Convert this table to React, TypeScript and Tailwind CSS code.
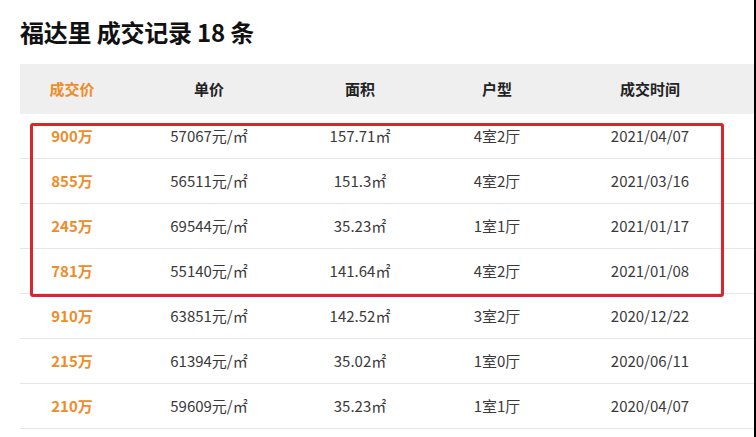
const rows = [
  { price: "900万", unit: "57067元/㎡", area: "157.71㎡", layout: "4室2厅", date: "2021/04/07" },
  { price: "855万", unit: "56511元/㎡", area: "151.3㎡", layout: "4室2厅", date: "2021/03/16" },
  { price: "245万", unit: "69544元/㎡", area: "35.23㎡", layout: "1室1厅", date: "2021/01/17" },
  { price: "781万", unit: "55140元/㎡", area: "141.64㎡", layout: "4室2厅", date: "2021/01/08" },
  { price: "910万", unit: "63851元/㎡", area: "142.52㎡", layout: "3室2厅", date: "2020/12/22" },
  { price: "215万", unit: "61394元/㎡", area: "35.02㎡", layout: "1室0厅", date: "2020/06/11" },
  { price: "210万", unit: "59609元/㎡", area: "35.23㎡", layout: "1室1厅", date: "2020/04/07" },
];

const cols = "grid grid-cols-[104px_170px_132px_142px_164px_1fr] items-center";

export default function App() {
  return (
    <div
      className="w-[756px] h-[437px] overflow-hidden bg-white border-r-2 border-black"
      style={{ fontFamily: '"Noto Sans CJK SC", "Noto Sans", sans-serif' }}
    >
      <h1 className="pl-5 pt-[16px] h-[64px] text-[24px] font-bold text-[#111] leading-[32px] tracking-[-0.2px]">
        福达里 成交记录 18 条
      </h1>

      <div className="relative ml-5 w-[734px]">
        {/* Header */}
        <div className={`${cols} h-[50px] bg-[#efefef] text-[15px] font-bold text-[#222]`}>
          <div className="text-center text-[#ef8c2a]">成交价</div>
          <div className="text-center">单价</div>
          <div className="text-center">面积</div>
          <div className="text-center">户型</div>
          <div className="text-center">成交时间</div>
          <div />
        </div>

        {/* Rows */}
        {rows.map((r) => (
          <div
            key={r.date + r.price}
            className={`${cols} h-[45px] border-b border-[#e6e6e6] text-[15px] text-[#3a3a3a]`}
          >
            <div className="text-center font-bold text-[#ef8c2a]">{r.price}</div>
            <div className="text-center">{r.unit}</div>
            <div className="text-center">{r.area}</div>
            <div className="text-center">{r.layout}</div>
            <div className="text-center">{r.date}</div>
            <div />
          </div>
        ))}

        {/* Highlight box */}
        <div className="absolute left-[10px] top-[59px] w-[694px] h-[174px] border-[3px] border-[#d8262b] rounded-[3px] pointer-events-none" />
      </div>
    </div>
  );
}
